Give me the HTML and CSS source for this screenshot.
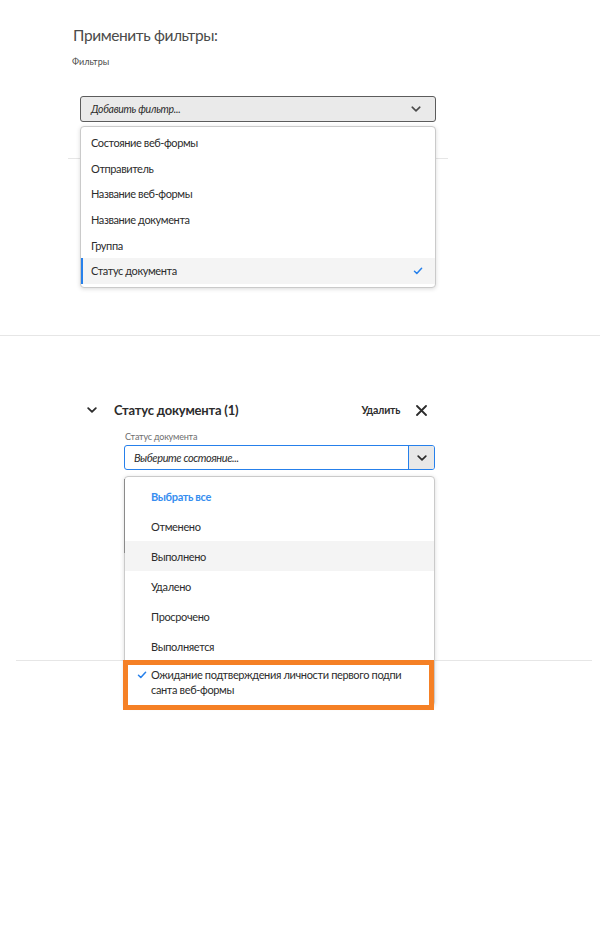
FILE: index.html
```html
<!DOCTYPE html>
<html lang="ru">
<head>
    <meta charset="UTF-8">
    <title>Фильтры</title>
    <link rel="stylesheet" href="styles.css">
</head>
<body>
    <div class="apply">
        <h1 class="apply-title">Применить фильтры:</h1>
        <div class="apply-label">Фильтры</div>
        <div class="picker-wrap">
            <div class="picker">
                <span class="picker-text">Добавить фильтр...</span>
                <svg class="chev" width="10" height="6" viewBox="0 0 10 6"><path d="M1.2 1.2 5 4.8 8.8 1.2" fill="none" stroke="#4b4b4b" stroke-width="1.6" stroke-linecap="round" stroke-linejoin="round"/></svg>
            </div>
            <ul class="menu menu-fields">
                <li>Состояние веб-формы</li>
                <li>Отправитель</li>
                <li>Название веб-формы</li>
                <li>Название документа</li>
                <li>Группа</li>
                <li class="is-selected">Статус документа
                    <svg class="tick" width="10" height="8" viewBox="0 0 10 8"><path d="M1.5 4.3 3.8 6.5 8.6 1.3" fill="none" stroke="#2680eb" stroke-width="1.5" stroke-linecap="round" stroke-linejoin="round"/></svg>
                </li>
            </ul>
        </div>
        <hr class="rule-short">
    </div>

    <hr class="rule-full">

    <div class="group">
        <div class="group-head">
            <svg class="group-chev" width="10" height="6" viewBox="0 0 10 6"><path d="M1.2 1.2 5 4.8 8.8 1.2" fill="none" stroke="#2c2c2c" stroke-width="1.8" stroke-linecap="round" stroke-linejoin="round"/></svg>
            <span class="group-title">Статус документа (1)</span>
            <span class="group-remove">Удалить</span>
            <svg class="group-close" width="11" height="11" viewBox="0 0 11 11"><path d="M1 1 10 10M10 1 1 10" stroke="#2c2c2c" stroke-width="1.8" stroke-linecap="round"/></svg>
        </div>
        <div class="field">
            <div class="field-label">Статус документа</div>
            <div class="picker-wrap">
                <div class="combo">
                    <span class="combo-text">Выберите состояние...</span>
                    <span class="combo-btn">
                        <svg width="10" height="6" viewBox="0 0 10 6"><path d="M1.2 1.2 5 4.8 8.8 1.2" fill="none" stroke="#2c2c2c" stroke-width="1.7" stroke-linecap="round" stroke-linejoin="round"/></svg>
                    </span>
                </div>
                <ul class="menu menu-states">
                    <li class="select-all">Выбрать все</li>
                    <li>Отменено</li>
                    <li class="is-hover">Выполнено</li>
                    <li>Удалено</li>
                    <li>Просрочено</li>
                    <li>Выполняется</li>
                    <li class="is-multi">
                        <svg class="tick-left" width="10" height="8" viewBox="0 0 10 8"><path d="M1.5 4.3 3.8 6.5 8.6 1.3" fill="none" stroke="#2680eb" stroke-width="1.5" stroke-linecap="round" stroke-linejoin="round"/></svg>
                        <span>Ожидание подтверждения личности первого подпи<br>санта веб-формы</span>
                    </li>
                    <li class="mark"></li>
                </ul>
            </div>
        </div>
    </div>

    <hr class="rule-wide">
</body>
</html>
```

FILE: styles.css
```css
* {
    margin: 0;
    padding: 0;
    list-style: none;
    box-sizing: border-box;
}
body{
    min-height: 100vh;
    font-family: Lato, "Noto Sans", sans-serif;
    color: #2c2c2c;
    background: #fff;
}
hr{
    border: 0;
    height: 1px;
    background: #e6e6e6;
}
.apply{
    padding-top: 25px;
}
.apply-title{
    margin-left: 73px;
    font-size: 15.5px;
    line-height: 20px;
    font-weight: 400;
    letter-spacing: -0.4px;
    color: #4b4b4b;
}
.apply-label{
    margin: 11px 0 0 72px;
    font-size: 9px;
    line-height: 12px;
    color: #4b4b4b;
}
.picker-wrap{
    position: relative;
}
.apply .picker-wrap{
    margin: 28px 0 0 80px;
    width: 356px;
}
.picker{
    height: 26px;
    display: flex;
    align-items: center;
    justify-content: space-between;
    padding: 0 14px 0 10px;
    background: #eaeaea;
    border: 1px solid #5c5c5c;
    border-radius: 3px;
}
.picker-text{
    font-size: 10.5px;
    font-style: italic;
    letter-spacing: -0.3px;
    color: #2c2c2c;
}
.menu{
    position: absolute;
    left: 0;
    right: 0;
    background: #fff;
    border: 1px solid #cacaca;
    border-radius: 4px;
    box-shadow: 0 1px 4px rgba(0,0,0,.15);
    z-index: 2;
}
.menu-fields{
    top: 30px;
    padding: 3px 0;
}
.menu-fields li{
    height: 25.6px;
    display: flex;
    align-items: center;
    justify-content: space-between;
    padding: 0 12px 0 10px;
    font-size: 11px;
    letter-spacing: -0.4px;
}
.menu-fields li.is-selected{
    background: #f4f4f4;
    box-shadow: inset 2px 0 0 #2680eb;
}
.rule-short{
    margin: 36px 0 0 68px;
    width: 380px;
}
.rule-full{
    margin-top: 176px;
}
.group{
    margin-top: 64px;
}
.group-head{
    height: 20px;
    display: flex;
    align-items: center;
    padding-left: 87px;
}
.group-title{
    margin-left: 17px;
    font-size: 13px;
    font-weight: 700;
    letter-spacing: -0.2px;
}
.group-remove{
    margin-left: 123px;
    font-size: 10.5px;
    font-weight: 700;
    letter-spacing: -0.2px;
}
.group-close{
    margin-left: 16px;
}
.field{
    margin: 11px 0 0 124px;
    width: 311px;
}
.field-label{
    margin-left: 1px;
    font-size: 9px;
    line-height: 12px;
    letter-spacing: -0.2px;
    color: #6e6e6e;
}
.field .picker-wrap{
    margin-top: 2px;
}
.combo{
    height: 25px;
    display: flex;
    border: 1px solid #2680eb;
    border-radius: 3px;
    overflow: hidden;
}
.combo-text{
    flex: 1;
    display: flex;
    align-items: center;
    padding-left: 9px;
    font-size: 11px;
    font-style: italic;
    letter-spacing: -0.4px;
}
.combo-btn{
    width: 26px;
    display: flex;
    align-items: center;
    justify-content: center;
    background: #e8e8e8;
    border-left: 1px solid #2680eb;
}
.menu-states{
    top: 31px;
    padding: 4px 0 2px;
}
.menu-states::before{
    content: "";
    position: absolute;
    left: -1px;
    top: 2px;
    height: 74px;
    width: 1px;
    background: #8a8a8a;
}
.menu-states li{
    height: 30px;
    display: flex;
    align-items: center;
    padding-left: 26px;
    font-size: 11px;
    letter-spacing: -0.35px;
}
.menu-states li.select-all{
    color: #378ef0;
    font-weight: 700;
}
.menu-states li.is-hover{
    background: #f4f4f4;
}
.menu-states li.is-multi{
    height: auto;
    align-items: flex-start;
    padding: 6px 0 6px 12px;
    line-height: 15px;
}
.tick-left{
    margin: 4px 4px 0 0;
}
.menu-states li.mark{
    position: absolute;
    left: -2px;
    top: 183px;
    width: 311px;
    height: 50px;
    padding: 0;
    border: 5px solid #f58025;
}
.rule-wide{
    margin: 190px 0 0 16px;
    width: 576px;
}
```
